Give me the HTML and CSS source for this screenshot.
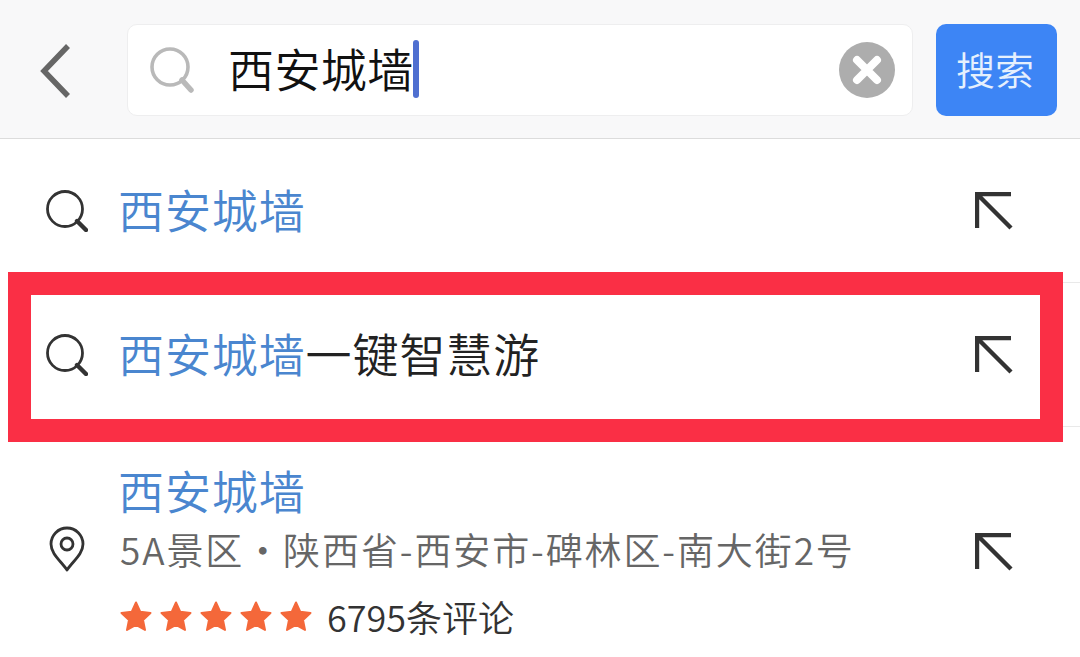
FILE: index.html
```html
<!DOCTYPE html>
<html lang="zh-CN">
<head>
<meta charset="utf-8">
<title>搜索</title>
<link rel="stylesheet" href="styles.css">
</head>
<body>
<header class="top">
  <svg class="back" width="30" height="54" viewBox="0 0 30 54"><path d="M28 2 L4 27 L28 52" fill="none" stroke="#666" stroke-width="5.5"/></svg>
  <div class="field">
    <svg class="field-search" width="44" height="46" viewBox="0 0 44 46"><circle cx="20" cy="20" r="18" fill="none" stroke="#b9b9b9" stroke-width="3.6"/><path d="M32 33 L41 43" stroke="#b9b9b9" stroke-width="5.5" stroke-linecap="round"/></svg>
    <span class="query">西安城墙</span><span class="caret"></span>
    <svg class="clear" width="56" height="56" viewBox="0 0 56 56"><circle cx="28" cy="28" r="28" fill="#adadad"/><path d="M18 18 L38 38 M38 18 L18 38" stroke="#fff" stroke-width="8" stroke-linecap="round"/></svg>
  </div>
  <button class="go">搜索</button>
</header>
<main>
  <div class="row r1">
    <svg class="ico" width="42" height="42" viewBox="0 0 42 42"><circle cx="19" cy="19" r="17.5" fill="none" stroke="#333" stroke-width="2.8"/><path d="M31 31 L40 40" stroke="#333" stroke-width="4.4" stroke-linecap="round"/></svg>
    <div class="text"><span class="hit">西安城墙</span></div>
    <svg class="arrow" width="38" height="38" viewBox="0 0 38 38"><path d="M2 36 V2 H36 M2 2 L36 36" fill="none" stroke="#333" stroke-width="4.4"/></svg>
  </div>
  <div class="row r2">
    <svg class="ico" width="42" height="42" viewBox="0 0 42 42"><circle cx="19" cy="19" r="17.5" fill="none" stroke="#333" stroke-width="2.8"/><path d="M31 31 L40 40" stroke="#333" stroke-width="4.4" stroke-linecap="round"/></svg>
    <div class="text"><span class="hit">西安城墙</span>一键智慧游</div>
    <svg class="arrow" width="38" height="38" viewBox="0 0 38 38"><path d="M2 36 V2 H36 M2 2 L36 36" fill="none" stroke="#333" stroke-width="4.4"/></svg>
  </div>
  <div class="row r3">
    <svg class="ico pin" width="36" height="46" viewBox="0 0 36 46"><path d="M18 44 C12 35 2 28 2 18 A16 16 0 0 1 34 18 C34 28 24 35 18 44 Z" fill="none" stroke="#333" stroke-width="2.8" stroke-linejoin="round"/><circle cx="18" cy="18" r="6" fill="none" stroke="#333" stroke-width="2.8"/></svg>
    <div class="text">
      <div class="hit title">西安城墙</div>
      <div class="sub">5A景区・陕西省-西安市-碑林区-南大街2号</div>
      <div class="meta">
        <span class="stars">
          <svg width="32" height="30" viewBox="0 0 32 30"><path d="M16 1.5 L20.3 10.8 L30.5 12 L23 19 L25 29 L16 24 L7 29 L9 19 L1.5 12 L11.7 10.8 Z" fill="#f4683a" stroke="#f4683a" stroke-width="2" stroke-linejoin="round"/></svg>
          <svg width="32" height="30" viewBox="0 0 32 30"><path d="M16 1.5 L20.3 10.8 L30.5 12 L23 19 L25 29 L16 24 L7 29 L9 19 L1.5 12 L11.7 10.8 Z" fill="#f4683a" stroke="#f4683a" stroke-width="2" stroke-linejoin="round"/></svg>
          <svg width="32" height="30" viewBox="0 0 32 30"><path d="M16 1.5 L20.3 10.8 L30.5 12 L23 19 L25 29 L16 24 L7 29 L9 19 L1.5 12 L11.7 10.8 Z" fill="#f4683a" stroke="#f4683a" stroke-width="2" stroke-linejoin="round"/></svg>
          <svg width="32" height="30" viewBox="0 0 32 30"><path d="M16 1.5 L20.3 10.8 L30.5 12 L23 19 L25 29 L16 24 L7 29 L9 19 L1.5 12 L11.7 10.8 Z" fill="#f4683a" stroke="#f4683a" stroke-width="2" stroke-linejoin="round"/></svg>
          <svg width="32" height="30" viewBox="0 0 32 30"><path d="M16 1.5 L20.3 10.8 L30.5 12 L23 19 L25 29 L16 24 L7 29 L9 19 L1.5 12 L11.7 10.8 Z" fill="#f4683a" stroke="#f4683a" stroke-width="2" stroke-linejoin="round"/></svg>
        </span>
        <span class="count">6795条评论</span>
      </div>
    </div>
    <svg class="arrow" width="38" height="38" viewBox="0 0 38 38"><path d="M2 36 V2 H36 M2 2 L36 36" fill="none" stroke="#333" stroke-width="4.4"/></svg>
  </div>
  <div class="mark"></div>
</main>
</body>
</html>
```
FILE: styles.css
```css
* { box-sizing: border-box; }
html, body { margin: 0; height: 100%; overflow: hidden; }
body {
  width: 1080px;
  height: 657px;
  position: relative;
  background: #fff;
  font-family: "Noto Sans CJK SC", "Noto Sans", sans-serif;
  font-weight: 350;
  color: #222;
}
.top {
  height: 139px;
  background: #f8f8f9;
  border-bottom: 1px solid #dcdcdc;
  display: flex;
  align-items: flex-start;
  padding: 24px 23px 0 40px;
}
.back { margin: 20px 57px 0 0; flex: none; }
.field {
  flex: 1;
  height: 92px;
  background: #fff;
  border: 1px solid #eeeeef;
  border-radius: 10px;
  display: flex;
  align-items: center;
  padding: 0 17px 0 22px;
}
.field-search { flex: none; margin-right: 34px; }
.query { font-size: 46px; line-height: 60px; color: #111; letter-spacing: 0.4px; padding-bottom: 6px; }
.caret { width: 6px; height: 58px; border-radius: 3px; background: #4f6fd0; margin-top: -2px; margin-left: -1px; }
.clear { margin-left: auto; flex: none; }
.go {
  width: 121px;
  height: 92px;
  margin-left: 23px;
  flex: none;
  border: 0;
  border-radius: 10px;
  background: #3d85f5;
  color: #e6f0fd;
  font-family: inherit;
  font-weight: 350;
  font-size: 39px;
  padding: 0 3px 5px 0;
}
.row {
  display: flex;
  align-items: center;
  padding: 0 67px 0 46px;
  position: relative;
}
.r1, .r2 { height: 144px; }
.r1::after, .r2::after {
  content: "";
  position: absolute;
  left: 120px; right: 0; bottom: 0;
  height: 1px;
  background: #e9e9e9;
}
.r3 { height: 230px; align-items: flex-start; }
.ico { flex: none; }
.text {
  flex: 1;
  margin-left: 30px;
  padding-bottom: 7px;
  font-size: 46px;
  line-height: 60px;
  letter-spacing: 0.9px;
  color: #222;
}
.arrow { flex: none; }
.hit { color: #4a86cf; }
.r3 .text { padding-top: 32px; margin-left: 33px; }
.r3 .pin { margin: 99px 0 0 3px; }
.r3 .arrow { margin-top: 106px; }
.sub { font-size: 37px; line-height: 44px; margin: 8px 0 0 2px; color: #666; letter-spacing: 1.9px; white-space: nowrap; }
.meta { display: flex; align-items: center; margin: 23px 0 0 2px; height: 44px; }
.stars { display: flex; gap: 8px; }
.stars svg { display: block; }
.count { font-size: 36px; line-height: 44px; color: #333; letter-spacing: 0; margin-left: 15px; }
.mark {
  position: absolute;
  left: 8px; top: 272px;
  width: 1055px; height: 170px;
  border: 23px solid #fa2f45;
  pointer-events: none;
}
```
